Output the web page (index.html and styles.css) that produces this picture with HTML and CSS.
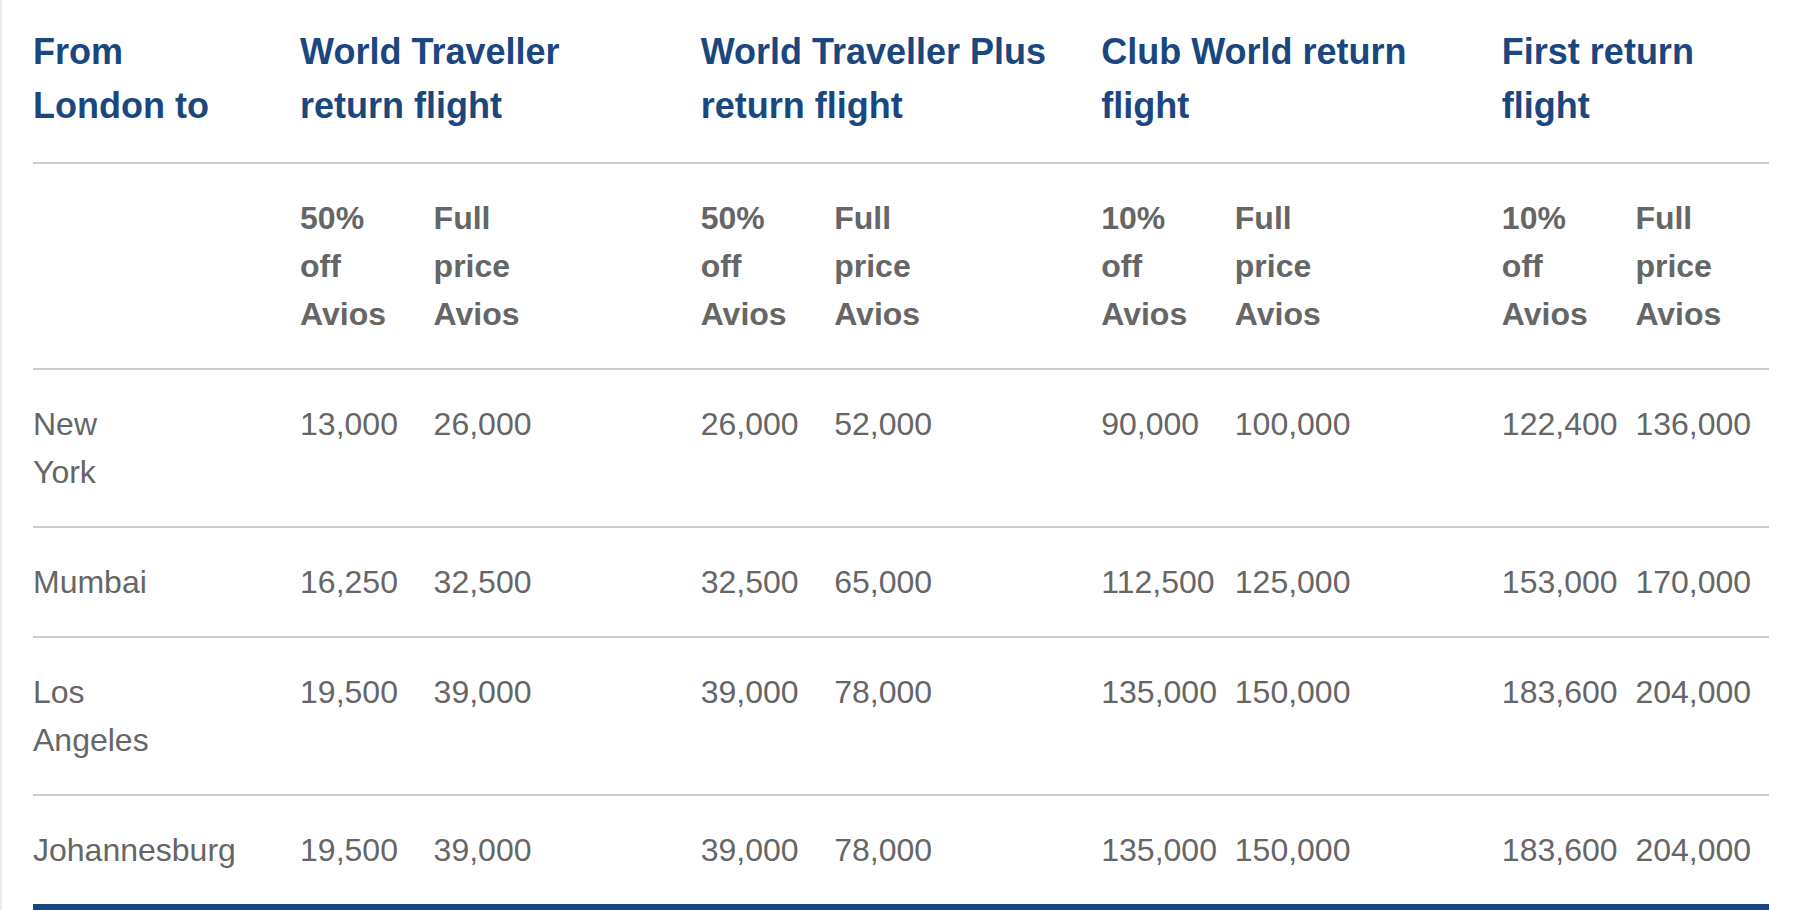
FILE: index.html
```html
<!DOCTYPE html>
<html lang="en">
<head>
<meta charset="utf-8">
<title>Avios prices from London</title>
<link rel="stylesheet" href="styles.css">
</head>
<body>
<div class="page">
  <table class="fares">
    <thead>
      <tr class="group-row">
        <th class="group" colspan="2">From London to</th>
        <th class="group" colspan="3">World Traveller return flight</th>
        <th class="group" colspan="3">World Traveller Plus return flight</th>
        <th class="group" colspan="3">Club World return flight</th>
        <th class="group" colspan="2">First return flight</th>
      </tr>
      <tr class="sub-row">
        <th class="sub"></th>
        <th class="sub"></th>
        <th class="sub">50% off Avios</th>
        <th class="sub">Full price Avios</th>
        <th class="sub"></th>
        <th class="sub">50% off Avios</th>
        <th class="sub">Full price Avios</th>
        <th class="sub"></th>
        <th class="sub">10% off Avios</th>
        <th class="sub">Full price Avios</th>
        <th class="sub"></th>
        <th class="sub">10% off Avios</th>
        <th class="sub">Full price Avios</th>
      </tr>
    </thead>
    <tbody>
      <tr>
        <td class="city">New York</td><td></td>
        <td class="num">13,000</td><td class="num">26,000</td><td></td>
        <td class="num">26,000</td><td class="num">52,000</td><td></td>
        <td class="num">90,000</td><td class="num">100,000</td><td></td>
        <td class="num">122,400</td><td class="num">136,000</td>
      </tr>
      <tr>
        <td class="city">Mumbai</td><td></td>
        <td class="num">16,250</td><td class="num">32,500</td><td></td>
        <td class="num">32,500</td><td class="num">65,000</td><td></td>
        <td class="num">112,500</td><td class="num">125,000</td><td></td>
        <td class="num">153,000</td><td class="num">170,000</td>
      </tr>
      <tr>
        <td class="city">Los Angeles</td><td></td>
        <td class="num">19,500</td><td class="num">39,000</td><td></td>
        <td class="num">39,000</td><td class="num">78,000</td><td></td>
        <td class="num">135,000</td><td class="num">150,000</td><td></td>
        <td class="num">183,600</td><td class="num">204,000</td>
      </tr>
      <tr class="last">
        <td class="city">Johannesburg</td><td></td>
        <td class="num">19,500</td><td class="num">39,000</td><td></td>
        <td class="num">39,000</td><td class="num">78,000</td><td></td>
        <td class="num">135,000</td><td class="num">150,000</td><td></td>
        <td class="num">183,600</td><td class="num">204,000</td>
      </tr>
    </tbody>
  </table>
</div>
</body>
</html>
```

FILE: styles.css
```css
html, body {
  margin: 0;
  padding: 0;
  background: #ffffff;
  overflow: hidden;
}

body {
  font-family: "Liberation Sans", Arial, Helvetica, sans-serif;
  color: #666666;
}

.page {
  border-left: 2px solid #e7eaef;
  padding: 0 31px;
  height: 910px;
  box-sizing: border-box;
}

.fares {
  width: 100%;
  table-layout: fixed;
  border-collapse: separate;
  border-spacing: 0;
}

.fares th,
.fares td {
  text-align: left;
  vertical-align: top;
  border-bottom: 2px solid #cccccc;
}

.fares .group {
  font-size: 36px;
  line-height: 54px;
  font-weight: bold;
  color: #1b477f;
  padding: 25px 44px 29px 0;
}

.fares .sub {
  font-size: 32px;
  line-height: 48px;
  font-weight: bold;
  color: #666666;
  padding: 30px 24px 30px 0;
}

.fares td {
  font-size: 32px;
  line-height: 48px;
  color: #666666;
  padding: 30px 24px 30px 0;
}

.fares .num {
  white-space: nowrap;
}

.fares tr.last td {
  border-bottom: 6px solid #1b4580;
}
```
